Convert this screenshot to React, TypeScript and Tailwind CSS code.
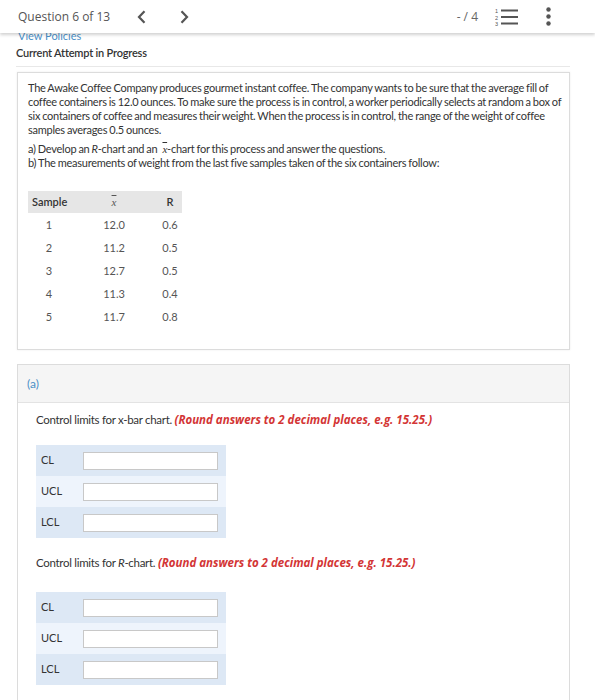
import React from "react";

const font = { fontFamily: "Lato, 'Open Sans', Arial, sans-serif" };
const tight = "tracking-[-0.25px] [word-spacing:-0.5px]";

function XBar({ className = "" }: { className?: string }) {
  return (
    <span className={`italic overline decoration-[0.5px] ${className}`} style={{ fontFamily: "'Liberation Serif', serif" }}>
      x
    </span>
  );
}

function AnswerTable() {
  const rows = [
    { label: "CL", bg: "bg-[#dde8f5]" },
    { label: "UCL", bg: "bg-[#eef4fc]" },
    { label: "LCL", bg: "bg-[#dde8f5]" },
  ];
  return (
    <div className="w-[190px] flex flex-col">
      {rows.map((r) => (
        <div key={r.label} className={`${r.bg} h-[31px] flex items-center pl-[5px]`}>
          <span className="w-[42px] text-[11px] text-[#333]">{r.label}</span>
          <div className="w-[135px] h-[18px] bg-white border border-[#c8c8c8]" />
        </div>
      ))}
    </div>
  );
}

export default function App() {
  const data = [
    ["1", "12.0", "0.6"],
    ["2", "11.2", "0.5"],
    ["3", "12.7", "0.5"],
    ["4", "11.3", "0.4"],
    ["5", "11.7", "0.8"],
  ];
  const redStyle = { fontFamily: "'Open Sans', sans-serif", fontSize: "11.5px" };
  return (
    <div className="w-[595px] h-[700px] overflow-hidden bg-white relative" style={font}>
      {/* Header */}
      <div className="absolute top-0 left-0 right-0 h-[33px] bg-white z-10 flex items-center shadow-[0_2px_3px_rgba(0,0,0,0.18)]">
        <span className="ml-[18px] text-[12px] text-[#555]" style={{ fontFamily: "'Open Sans', sans-serif" }}>
          Question 6 of 13
        </span>
        <svg className="ml-[27px]" width="9" height="14" viewBox="0 0 9 14">
          <path d="M7.5 1.2 L2 7 L7.5 12.8" fill="none" stroke="#555" strokeWidth="2.2" />
        </svg>
        <svg className="ml-[34px]" width="9" height="14" viewBox="0 0 9 14">
          <path d="M1.5 1.2 L7 7 L1.5 12.8" fill="none" stroke="#555" strokeWidth="2.2" />
        </svg>
        <span className="ml-auto text-[12px] text-[#666]" style={{ fontFamily: "'Open Sans', sans-serif" }}>
          - / 4
        </span>
        <svg className="ml-[17px]" width="23" height="18" viewBox="0 0 23 18">
          <text x="0" y="5" fontSize="5.5" fill="#555" fontFamily="Arial">1</text>
          <text x="0" y="11.5" fontSize="5.5" fill="#555" fontFamily="Arial">2</text>
          <text x="0" y="18" fontSize="5.5" fill="#555" fontFamily="Arial">3</text>
          <rect x="6" y="1.5" width="17" height="2" fill="#555" />
          <rect x="6" y="8" width="17" height="2" fill="#555" />
          <rect x="6" y="14.5" width="17" height="2" fill="#555" />
        </svg>
        <svg className="ml-[28px] mr-[44px]" width="5" height="19" viewBox="0 0 5 19">
          <circle cx="2.5" cy="2.5" r="2.2" fill="#555" />
          <circle cx="2.5" cy="9.5" r="2.2" fill="#555" />
          <circle cx="2.5" cy="16.5" r="2.2" fill="#555" />
        </svg>
      </div>

      {/* Content */}
      <div className="pt-[29px] flex flex-col">
        <div className="ml-[18px] text-[11px] leading-[14px] text-[#4a8fc7]">View Policies</div>
        <div className="mx-[16px] mt-[3px] pb-[6px] border-b border-[#e8e8e8] text-[11px] leading-[14px] font-semibold tracking-[-0.2px] text-[#333] w-[554px]">
          Current Attempt in Progress
        </div>

        {/* Question box */}
        <div className="ml-[17px] mt-[5px] w-[553px] h-[278px] border border-[#dcdcdc] shadow-[0_0_2px_rgba(0,0,0,0.08)] pl-[10px] pt-[8px] text-[11px] leading-[14px] text-[#333]">
          <p className={`whitespace-nowrap ${tight}`}>
            The Awake Coffee Company produces gourmet instant coffee. The company wants to be sure that the average fill of
            <br />
            coffee containers is 12.0 ounces. To make sure the process is in control, a worker periodically selects at random a box of
            <br />
            six containers of coffee and measures their weight. When the process is in control, the range of the weight of coffee
            <br />
            samples averages 0.5 ounces.
          </p>
          <p className={`mt-[5px] whitespace-nowrap ${tight}`}>
            a) Develop an <i>R</i>-chart and an <XBar className="ml-[3px]" />-chart for this process and answer the questions.
            <br />
            b) The measurements of weight from the last five samples taken of the six containers follow:
          </p>

          <div className="mt-[21px] w-[154px] text-[11px]">
            <div className="h-[22px] bg-[#e6e6e6] flex items-center font-semibold text-[#333]">
              <span className="w-[42px] pl-[4px]">Sample</span>
              <span className="w-[88px] text-center font-normal text-[#555]">
                <XBar />
              </span>
              <span className="w-[24px] text-center">R</span>
            </div>
            {data.map((r) => (
              <div key={r[0]} className="h-[23px] flex items-center text-[#555]">
                <span className="w-[42px] text-center">{r[0]}</span>
                <span className="w-[88px] text-center">{r[1]}</span>
                <span className="w-[24px] text-center">{r[2]}</span>
              </div>
            ))}
          </div>
        </div>

        {/* Part (a) box */}
        <div className="ml-[17px] mt-[14px] w-[553px] h-[400px] border border-[#dcdcdc] flex flex-col">
          <div className="h-[38px] bg-[#f5f5f5] border-b border-[#e3e3e3] flex items-center pl-[9px] text-[12px] text-[#4a8fc7]">
            (a)
          </div>
          <div className="pl-[18px] pt-[9px] text-[11.5px] text-[#333]">
            <div className="h-[15px] leading-[15px] whitespace-nowrap tracking-[-0.3px]">
              Control limits for x-bar chart.{" "}
              <span className="font-bold italic text-[#d33535] tracking-normal" style={redStyle}>
                (Round answers to 2 decimal places, e.g. 15.25.)
              </span>
            </div>
            <div className="mt-[18px]">
              <AnswerTable />
            </div>
            <div className="mt-[17px] h-[15px] leading-[15px] whitespace-nowrap tracking-[-0.3px]">
              Control limits for <i>R</i>-chart.{" "}
              <span className="font-bold italic text-[#d33535] tracking-normal" style={redStyle}>
                (Round answers to 2 decimal places, e.g. 15.25.)
              </span>
            </div>
            <div className="mt-[22px]">
              <AnswerTable />
            </div>
          </div>
        </div>
      </div>
    </div>
  );
}
